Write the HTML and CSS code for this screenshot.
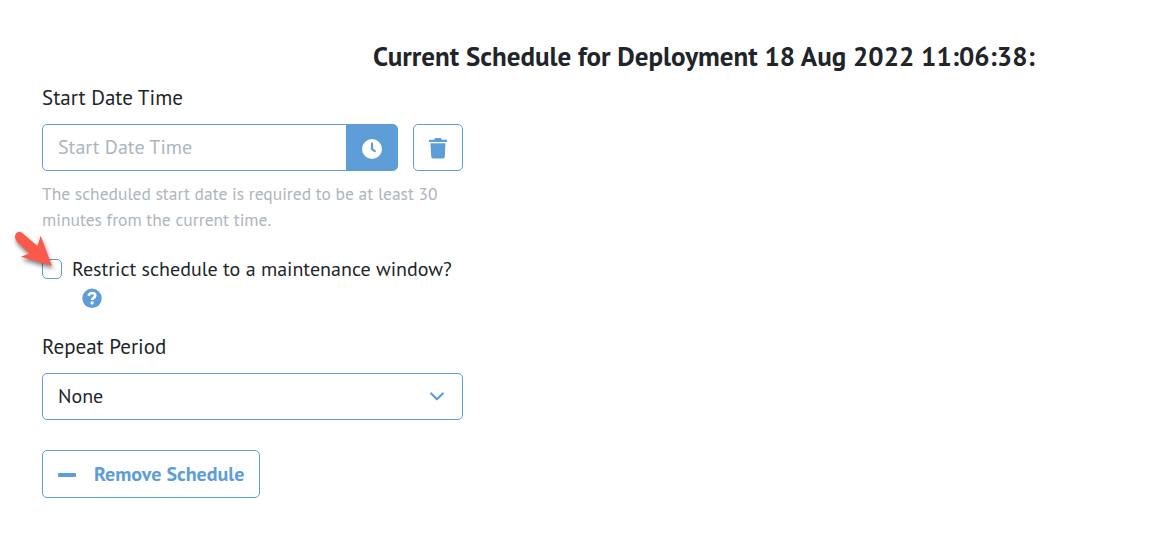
FILE: index.html
```html
<!DOCTYPE html>
<html lang="en">
<head>
<meta charset="utf-8">
<title>Deployment Schedule</title>
<link rel="stylesheet" href="styles.css">
</head>
<body>
<main class="page">
  <h1 class="title">Current Schedule for Deployment 18 Aug 2022 11:06:38:</h1>
  <form class="form">
    <label class="label label-start" for="start">Start Date Time</label>
    <div class="row">
      <div class="group">
        <input class="input" id="start" type="text" placeholder="Start Date Time">
        <button class="addon" type="button" aria-label="Pick time">
          <svg width="20" height="20" viewBox="0 0 20 20"><circle cx="10" cy="10" r="10" fill="#fff"/><path d="M10 4.700v5.500l2.800 2" fill="none" stroke="#5d9dd8" stroke-width="2.200" stroke-linecap="round" stroke-linejoin="round"/></svg>
        </button>
      </div>
      <button class="trash" type="button" aria-label="Clear">
        <svg width="18" height="21" viewBox="0 0 18 21" fill="#5d9dd8"><path d="M.6 1.800H5L5.700.7Q6.100 0 6.900 0H11.100Q11.900 0 12.300.7L13 1.800H17.400Q18 1.800 18 2.400V3.400Q18 4 17.400 4H.6Q0 4 0 3.400V2.400Q0 1.800.6 1.800ZM1.500 5.200H16.500L15.800 18.800Q15.700 20.600 14 20.600H4Q2.300 20.600 2.200 18.800Z"/></svg>
      </button>
    </div>
    <p class="hint">The scheduled start date is required to be at least 30<br>minutes from the current time.</p>
    <div class="check">
      <span class="box"><svg class="arrow" width="44" height="42" viewBox="0 0 44 42"><path d="M8 8.500Q10.500 5.700 14 7.700Q14.800 8.200 16 9.400L29.500 21L32.700 10.700L43.700 40.700L12.700 31.700L21.500 28.500L9.200 17Q5.500 12.500 8 8.500Z" fill="#fb5a4b"/></svg></span>
      <span>Restrict schedule to a maintenance window?</span>
    </div>
    <div class="help"><svg width="20" height="20" viewBox="0 0 20 20"><circle cx="10" cy="10.300" r="9.700" fill="#5d9dd8"/><path d="M6.500 7.700Q7.500 5 10.200 5Q13.200 5 13.200 7.500Q13.200 9 11.700 9.700Q10.200 10.400 10.200 12" fill="none" stroke="#fff" stroke-width="2.700"/><circle cx="10.100" cy="14.900" r="1.700" fill="#fff"/></svg></div>
    <label class="label label-repeat">Repeat Period</label>
    <div class="select"><span>None</span><svg width="14" height="9" viewBox="0 0 14 9"><path d="M1.200 1.500L7 7.200L12.800 1.500" fill="none" stroke="#5d9dd8" stroke-width="2.200" stroke-linecap="round" stroke-linejoin="round"/></svg></div>
    <button class="remove" type="button"><i class="minus"></i><span>Remove Schedule</span></button>
  </form>
</main>
</body>
</html>
```
FILE: styles.css
```css
* { box-sizing: border-box; }
body { margin: 0; background: #fff; color: #212529; font: 20px/30px "PT Sans", "Noto Sans", sans-serif; }
svg { display: block; flex: none; }
button { background: #fff; padding: 0; cursor: pointer; }
.page { width: 1159px; height: 534px; overflow: hidden; padding: 37px 0 0 42px; }
.title { margin: 0; padding-left: 331px; font-size: 27px; line-height: 38px; font-weight: 700; white-space: nowrap; }
.form { width: 421px; }
.label { display: block; height: 30px; white-space: nowrap; font-size: 21px; }
.label-start { margin: 8px 0 11px; }
.row { display: flex; gap: 15px; height: 47px; }
.group { display: flex; width: 356px; border: 1px solid #5d9dd8; border-radius: 5px; background: linear-gradient(to right, #fff 303px, #5d9dd8 303px); }
.input { width: 303px; min-width: 0; border: 0; outline: 0; padding: 0 15px 2px; background: none; font: inherit; color: #212529; }
.input::placeholder { color: #adb5bd; opacity: 1; }
.addon { flex: 1; border: 0; background: none; display: flex; align-items: center; justify-content: center; padding-top: 2px; }
.trash { width: 50px; border: 1px solid #5d9dd8; border-radius: 5px; display: flex; align-items: center; justify-content: center; padding-top: 2px; }
.hint { margin: 10px 0 0; font-size: 17.500px; line-height: 26px; color: #adb5bd; white-space: nowrap; }
.check { display: flex; align-items: center; gap: 10px; height: 30px; margin-top: 21px; white-space: nowrap; }
.box { position: relative; width: 20px; height: 20px; border: 1px solid #5d9dd8; border-radius: 5px; }
.arrow { position: absolute; left: -35px; top: -35px; filter: drop-shadow(1px 3px 2px rgba(0, 0, 0, .5)); overflow: visible; }
.help { margin: 4px 0 0 40px; }
.label-repeat { margin: 24px 0 11px; }
.select { display: flex; align-items: center; justify-content: space-between; height: 47px; border: 1px solid #5d9dd8; border-radius: 5px; padding: 0 18px 1px 15px; }
.remove { display: flex; align-items: center; width: 218px; height: 48px; margin-top: 30px; padding-left: 15px; border: 1px solid #5d9dd8; border-radius: 5px; color: #5d9dd8; font: 700 20px/30px "PT Sans", "Noto Sans", sans-serif; white-space: nowrap; }
.minus { width: 18px; height: 4px; border-radius: 1px; background: #5d9dd8; margin: 2px 18px 0 0; }
```
